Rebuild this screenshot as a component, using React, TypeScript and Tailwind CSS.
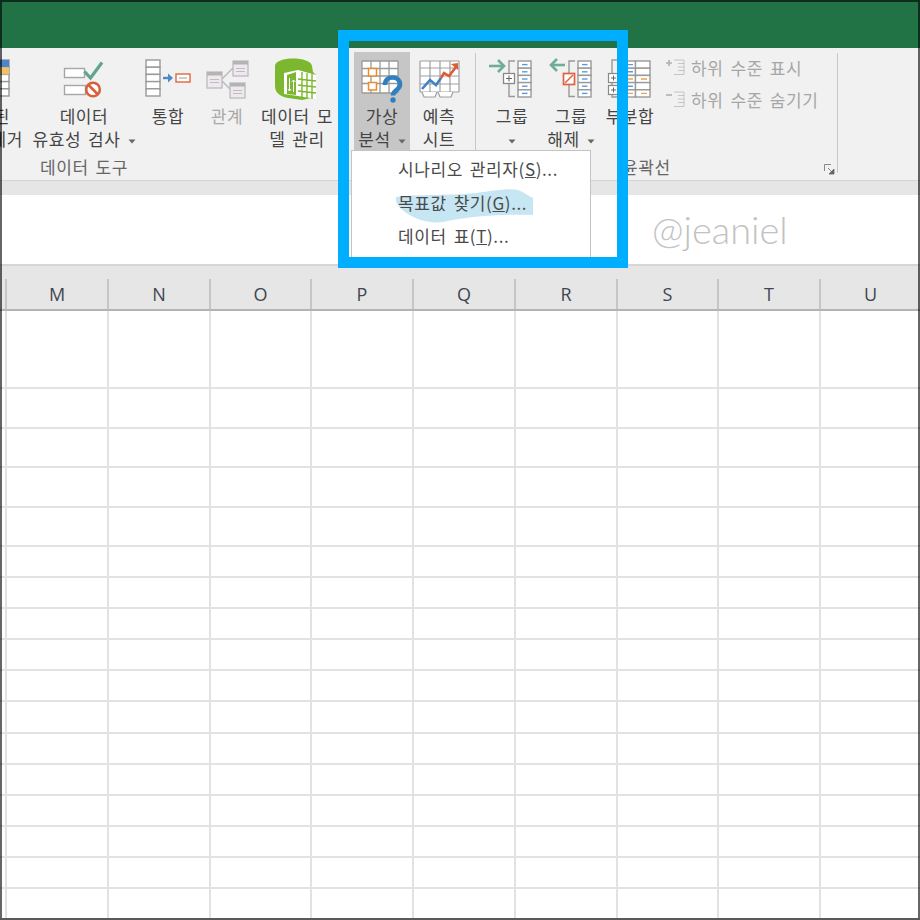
const columns = ['', 'M', 'N', 'O', 'P', 'Q', 'R', 'S', 'T', 'U'];
const rowCount = 16;

const Caret = () => (
  <svg width="8" height="5" viewBox="0 0 8 5" className="inline-block align-middle">
    <path d="M0.5 0.5h7L4 4.5z" fill="#666" />
  </svg>
);

// viewBox uses the same coordinates as the page, so the art lines up with the column it sits in
const ColIcon = ({ left, width, children }: { left: number; width: number; children: React.ReactNode }) => (
  <svg width={width} height={46} viewBox={`${left} 58 ${width} 46`} className="block shrink-0">
    {children}
  </svg>
);

const RibbonItem = ({
  left,
  width,
  lines,
  icon,
  active,
  muted,
}: {
  left: number;
  width: number;
  lines: React.ReactNode[];
  icon: React.ReactNode;
  active?: boolean;
  muted?: boolean;
}) => (
  <div
    className={`flex flex-col items-center pt-[6px] h-[98px] shrink-0 ${active ? 'bg-[#c6c6c6]' : ''} ${
      muted ? 'text-[#a8a8a8]' : 'text-[#444444]'
    }`}
    style={{ width }}
  >
    <ColIcon left={left} width={width}>
      {icon}
    </ColIcon>
    {lines.map((line, i) => (
      <div key={i} className="leading-[23px] whitespace-nowrap">
        {line}
      </div>
    ))}
  </div>
);

const TableStack = ({ x, y = 61, w = 14, rows = 5, rowH = 7.2 }: { x: number; y?: number; w?: number; rows?: number; rowH?: number }) => (
  <g fill="#fff" stroke="#999" strokeWidth="1.4">
    {Array.from({ length: rows }).map((_, i) => (
      <rect key={i} x={x} y={y + i * rowH} width={w} height={rowH} />
    ))}
  </g>
);

const GroupColumn = ({ x }: { x: number }) => (
  <g>
    <TableStack x={x} w={13} />
    {[0, 1, 2, 3, 4].map((i) => (
      <path key={i} d={`M${x + 4} ${64.6 + i * 7.2}h5.5`} stroke="#5b9bd5" strokeWidth="1.4" />
    ))}
  </g>
);

const ValidationIcon = () => (
  <g fill="none">
    <rect x="64.5" y="68.5" width="20" height="9" fill="#fff" stroke="#a6a6a6" strokeWidth="1.4" />
    <rect x="64.5" y="85.5" width="21" height="9" fill="#fff" stroke="#a6a6a6" strokeWidth="1.4" />
    <path d="M84.5 71.5l6 6.5 11.5-15.5" stroke="#5fa58e" strokeWidth="3.2" />
    <circle cx="93" cy="89.5" r="6.8" fill="#fff" stroke="#d9603b" strokeWidth="2.6" />
    <path d="M88.5 85l9 9" stroke="#d9603b" strokeWidth="2.6" />
  </g>
);

const ConsolidateIcon = () => (
  <g>
    <TableStack x={146} y={60} w={14} rows={5} rowH={7.2} />
    <path d="M163 78h6" stroke="#4a8cc7" strokeWidth="2.4" />
    <path d="M168 73.5l5 4.5-5 4.5z" fill="#4a8cc7" />
    <rect x="176" y="74" width="14" height="8" fill="#fff" stroke="#e0663f" strokeWidth="1.4" />
    <path d="M179 78h8" stroke="#aaa" strokeWidth="1.2" />
  </g>
);

const RelationBox = ({ x, y, w, h }: { x: number; y: number; w: number; h: number }) => (
  <g>
    <rect x={x} y={y} width={w} height={h} fill="#efe9ef" stroke="#b8b8b8" strokeWidth="1.2" />
    <rect x={x} y={y} width={w} height="3.5" fill="#b4b4b4" />
    <path d={`M${x + 3} ${y + 7.5}h${w - 6}M${x + 3} ${y + 10.5}h${w - 6}`} stroke="#bdbdbd" strokeWidth="1" />
  </g>
);

const RelationshipsIcon = () => (
  <g>
    <path d="M222 79l11-11M222 81l9 9" stroke="#b8b8b8" strokeWidth="1.4" fill="none" />
    <RelationBox x={207} y={72} w={15} h={16} />
    <RelationBox x={233} y={61} w={15} h={15} />
    <RelationBox x={230} y={83} w={15} h={15} />
  </g>
);

const ModelIcon = () => (
  <g>
    <path d="M275 66c0-10 36-10 37 0l1 6 3 3v22l-14 3-14-2c-9-2-13-6-13-12z" fill="#7cb82f" />
    <path d="M284 73l14-3 18 5v24l-18-3-14-2z" fill="#fff" />
    <path d="M302 72v25M307 73v25M312 74v25M298 79l18 2M298 85l18 2M298 91l18 2" stroke="#7cb82f" strokeWidth="1.4" fill="none" />
    <path d="M287 75v19l9 1V72z" fill="#7cb82f" />
    <path d="M289.500 78v13M293.500 92V80M291.500 82l2-2 2 2M288 89l1.500 2 1.500-2" stroke="#fff" strokeWidth="1" fill="none" />
  </g>
);

const WhatIfIcon = () => {
  const xs = [362, 371, 380, 389, 398];
  const ys = [61, 68.5, 76, 83.5, 93];
  return (
    <g>
      <rect x="362" y="61" width="36" height="32" fill="#fff" />
      <path
        d={`${xs.map((x) => `M${x} 61V93`).join('')}${ys.map((y) => `M362 ${y}H398`).join('')}`}
        stroke="#9a9a9a"
        strokeWidth="1.3"
        fill="none"
      />
      <rect x="368.5" y="68.5" width="8" height="7.5" fill="#fff" stroke="#ed8b2f" strokeWidth="1.5" />
      <rect x="368.5" y="82.5" width="8" height="7.5" fill="#fff" stroke="#ed8b2f" strokeWidth="1.5" />
      <path d="M385 85c0-5.500 3.500-7.500 7.500-7.500s7.500 2.500 7.500 7c0 5.500-7 5.500-7 11" fill="none" stroke="#2f7fc1" strokeWidth="4.600" />
      <circle cx="393" cy="100" r="2.700" fill="#2f7fc1" />
    </g>
  );
};

const ForecastIcon = () => {
  const xs = [420, 430, 440, 450, 459];
  const ys = [61, 68, 76, 84, 92];
  return (
    <g>
      <rect x="420" y="61" width="39" height="31" fill="#fff" />
      <path
        d={`${xs.map((x) => `M${x} 61V92`).join('')}${ys.map((y) => `M420 ${y}H459`).join('')}`}
        stroke="#a0a0a0"
        strokeWidth="1.2"
        fill="none"
      />
      <path d="M422 89l8-9 6 5 5-7" stroke="#3f83c4" strokeWidth="2.6" fill="none" />
      <path d="M441 78l3-5 5 3 7-9" stroke="#db5c38" strokeWidth="2.6" fill="none" />
      <path d="M451 64l7-1 0 7z" fill="#db5c38" />
      <path d="M422 92l2 5h11l2-5M438 92l2 5h11l2-5" stroke="#a0a0a0" strokeWidth="1.2" fill="#fff" />
    </g>
  );
};

const GroupIcon = () => (
  <g fill="none">
    <path d="M489 66h13" stroke="#6fae95" strokeWidth="2.6" />
    <path d="M498 60l6 6-6 6" stroke="#6fae95" strokeWidth="2.6" />
    <path d="M515 61h-6v12M509 84v12.500h6" stroke="#999" strokeWidth="1.4" />
    <rect x="503.500" y="73.500" width="11" height="10" fill="#fff" stroke="#888" strokeWidth="1.300" />
    <path d="M506 78.500h6M509 75.500v6" stroke="#666" strokeWidth="1.100" />
    <GroupColumn x={518} />
  </g>
);

const UngroupIcon = () => (
  <g fill="none">
    <path d="M552 65h13" stroke="#6fae95" strokeWidth="2.6" />
    <path d="M557 59l-6 6 6 6" stroke="#6fae95" strokeWidth="2.6" />
    <path d="M575 61h-6v12M569 85v11.500h6" stroke="#999" strokeWidth="1.4" />
    <rect x="563.500" y="73.500" width="11" height="11" fill="#fff" stroke="#e0603f" strokeWidth="1.700" />
    <path d="M565 83l8-8" stroke="#e0603f" strokeWidth="1.500" />
    <GroupColumn x={578} />
  </g>
);

const SubtotalIcon = () => (
  <g fill="none">
    <path d="M617 60h-5v13M612 83v2M612 94v3h5" stroke="#999" strokeWidth="1.4" />
    <rect x="608.500" y="73.500" width="10" height="9" fill="#fff" stroke="#888" strokeWidth="1.200" />
    <rect x="608.500" y="85.500" width="10" height="9" fill="#fff" stroke="#888" strokeWidth="1.200" />
    <path d="M611 78h5M613.500 75.500v5M611 90h5M613.500 87.500v5" stroke="#666" strokeWidth="1" />
    <TableStack x={621} y={61} w={14.500} />
    <TableStack x={635.500} y={61} w={14.500} />
    <path d="M627 64.600h6M627 71.800h6M627 86.200h6" stroke="#5b9bd5" strokeWidth="1.400" />
    <path d="M627 79h6M641 79h6M627 93.400h6M641 93.400h6" stroke="#f0a050" strokeWidth="1.400" />
  </g>
);

const RemoveDupIcon = () => (
  <g>
    <TableStack x={-6} y={60} w={15} />
    <rect x="-6" y="60" width="15" height="7.200" fill="#4a86c8" />
    <rect x="-6" y="67.200" width="15" height="7.200" fill="#efc26a" />
  </g>
);

const OutlineRow = ({ sign, text }: { sign: 'plus' | 'minus'; text: string }) => (
  <div className="flex items-center h-[32px]">
    <svg width="22" height="20" viewBox="0 0 22 20" className="shrink-0">
      <path d={sign === 'plus' ? 'M1 5h6M4 2v6' : 'M1 5h6'} stroke="#b0b0b0" strokeWidth="1.600" />
      <path d="M9 2h10M13 5.500h6M13 9h6M13 12.500h6M9 16.500h10M19 2v14.500" stroke="#c4c4c4" strokeWidth="1" fill="none" />
    </svg>
    <span className="ml-[4px] text-[#a6a6a6] whitespace-nowrap">{text}</span>
  </div>
);

const Separator = () => <div className="w-px h-[120px] mt-[1px] bg-[#c8c8c8] shrink-0" />;

const Ribbon = () => (
  <div className="flex items-start h-[132px] pt-[4px] bg-[#f1f1f1] text-[17px] tracking-[0.6px] [word-spacing:2.5px] overflow-hidden">
    <div className="w-[345px] shrink-0">
      <div className="flex">
        <div className="w-[30px] h-[98px] shrink-0 overflow-hidden pt-[6px] text-[#444444] relative">
          <ColIcon left={0} width={30}>
            <RemoveDupIcon />
          </ColIcon>
          <div className="flex justify-end pr-[20px] leading-[23px] whitespace-nowrap">중복된</div>
          <div className="flex justify-end pr-[7px] leading-[23px] whitespace-nowrap">항목 제거</div>
        </div>
        <RibbonItem
          left={30}
          width={108}
          icon={<ValidationIcon />}
          lines={[
            '데이터',
            <span key="v">
              유효성 검사 <Caret />
            </span>,
          ]}
        />
        <RibbonItem left={138} width={60} icon={<ConsolidateIcon />} lines={['통합']} />
        <RibbonItem left={198} width={58} icon={<RelationshipsIcon />} lines={['관계']} muted />
        <RibbonItem left={256} width={82} icon={<ModelIcon />} lines={['데이터 모', '델 관리']} />
      </div>
      <div className="w-[168px] mt-[5px] text-center leading-[24px] text-[#666666] whitespace-nowrap">데이터 도구</div>
    </div>
    <Separator />
    <div className="w-[129px] shrink-0 pl-[8px]">
      <div className="flex">
        <RibbonItem
          left={354}
          width={56}
          active
          icon={<WhatIfIcon />}
          lines={[
            '가상',
            <span key="w">
              분석 <Caret />
            </span>,
          ]}
        />
        <RibbonItem left={410} width={58} icon={<ForecastIcon />} lines={['예측', '시트']} />
      </div>
    </div>
    <Separator />
    <div className="w-[361px] shrink-0 pl-[6px]">
      <div className="flex">
        <RibbonItem left={482} width={60} icon={<GroupIcon />} lines={['그룹', <Caret key="g" />]} />
        <RibbonItem
          left={542}
          width={58}
          icon={<UngroupIcon />}
          lines={[
            '그룹',
            <span key="u">
              해제 <Caret />
            </span>,
          ]}
        />
        <RibbonItem left={600} width={60} icon={<SubtotalIcon />} lines={['부분합']} />
        <div className="ml-[5px]">
          <OutlineRow sign="plus" text="하위 수준 표시" />
          <OutlineRow sign="minus" text="하위 수준 숨기기" />
        </div>
      </div>
      <div className="flex items-center mt-[5px] h-[24px] pl-[140px] text-[#666666]">
        <span className="leading-[24px]">윤곽선</span>
        <svg width="11" height="11" viewBox="0 0 11 11" className="ml-[153px] mt-[5px]">
          <path d="M0.500 7V0.500H7" stroke="#888" fill="none" />
          <path d="M4 4l5 5M10 5v5H5z" stroke="#666" fill="#666" strokeWidth="0.800" />
        </svg>
      </div>
    </div>
    <Separator />
  </div>
);

const Sheet = () => (
  <div className="grid grid-rows-[78px_40px_39px_40px_39px_31px_31px_31px_31px_31px_32px_31px_31px_31px_31px_31px_31px] grid-cols-[7px_102px_102px_101px_102px_102px_102px_101px_102px_99px]">
    {Array.from({ length: rowCount + 1 }).flatMap((_, r) =>
      columns.map((_, c) => (
        <div
          key={`${r}-${c}`}
          className={`border-b-2 border-[#e2e2e2] ${c < columns.length - 1 ? 'border-r-2' : ''}`}
        />
      )),
    )}
  </div>
);

const ColumnHeader = () => (
  <div className="grid grid-cols-[7px_102px_102px_101px_102px_102px_102px_101px_102px_99px] h-[30px] bg-[#e6e6e6] border-b-2 border-[#b4b4b4] box-content">
    {columns.map((name, i) => (
      <div
        key={i}
        className={`flex items-center justify-center text-[18px] text-[#3f4650] font-['Open_Sans',sans-serif] ${
          i < columns.length - 1 ? 'border-r-2 border-[#c6c6c6]' : ''
        }`}
      >
        {name}
      </div>
    ))}
  </div>
);

const GoalMenu = () => (
  <div className="absolute left-[351px] top-[150px] w-[240px] h-[108px] bg-white border border-[#c4c4c4] text-[17px] tracking-[0.6px] [word-spacing:2.5px] text-[#4a4a4a]">
    <svg width="150" height="40" viewBox="390 185 150 40" className="absolute left-[38px] top-[34px]">
      <path
        d="M396 197c20-3 50-1 80-4 18-2 32-5 42-3 6 2 10 6 15 8l0 17c-30-1-62 1-90 7-16 2-30-4-38-10-6-4-10-9-9-15z"
        fill="#c5e6f2"
      />
    </svg>
    <div className="relative pt-[4px] pl-[46px] flex flex-col">
      <div className="h-[33.5px] leading-[28px] whitespace-nowrap">
        시나리오 관리자(<u>S</u>)...
      </div>
      <div className="h-[33.5px] leading-[28px] whitespace-nowrap">
        목표값 찾기(<u>G</u>)...
      </div>
      <div className="h-[33.5px] leading-[28px] whitespace-nowrap">
        데이터 표(<u>T</u>)...
      </div>
    </div>
  </div>
);

export default function App() {
  return (
    <div className="relative w-[920px] h-[920px] overflow-hidden bg-white font-['Noto_Sans_CJK_KR','Noto_Sans',sans-serif]">
      <div className="h-[48px] bg-[#217346]" />
      <Ribbon />
      <div className="h-[15px] bg-[#e6e6e6] border-y border-[#d4d4d4] box-content -mb-[2px]" />
      <div className="h-[69px] bg-white flex items-start pl-[652px]">
        <span className="mt-[10px] text-[38px] leading-[48px] text-[#c2c2c2] font-light font-['Lato',sans-serif]">@jeaniel</span>
      </div>
      <div className="h-[15px] bg-[#e6e6e6] border-t-2 border-[#d6d6d6]" />
      <ColumnHeader />
      <Sheet />

      <GoalMenu />
      {/* blue callout drawn on top of the ribbon */}
      <div className="absolute left-[338px] top-[30px] w-[290px] h-[238px] border-[11px] border-[#00aeff]" />
      {/* outer frame of the screenshot */}
      <div className="absolute inset-0 border-2 border-black/60" />
    </div>
  );
}
